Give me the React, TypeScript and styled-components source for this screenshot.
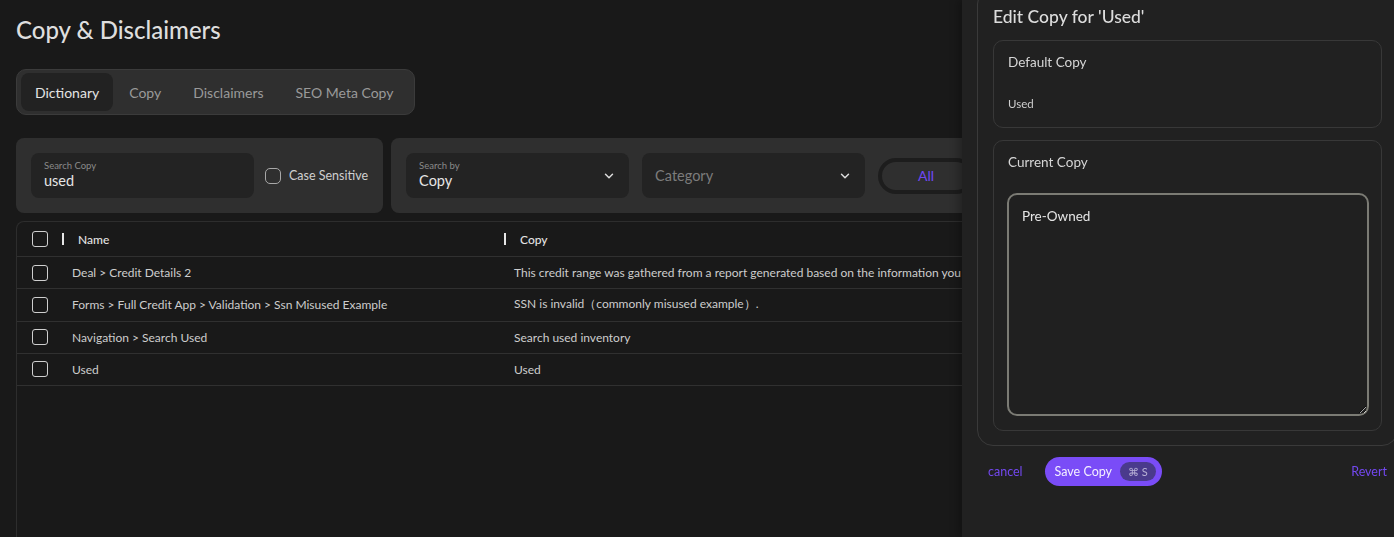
import React from 'react';
import styled, { createGlobalStyle } from 'styled-components';
import { ChevronDown } from 'lucide-react';

const GlobalStyle = createGlobalStyle`
  html, body {
    margin: 0;
    padding: 0;
    background: #191919;
    overflow: hidden;
  }
  body {
    font-family: Lato, 'Noto Sans', sans-serif;
    color: #dcdcdc;
  }
  * { box-sizing: border-box; }
`;

const Page = styled.div`
  height: 100vh;
  display: flex;
  flex-direction: column;
  padding: 15px 16px 0;
`;

const Title = styled.h1`
  margin: 0;
  font-size: 24px;
  line-height: 30px;
  font-weight: 500;
  color: #dedede;
`;

// 탭 영역
const Tabs = styled.div`
  margin-top: 24px;
  align-self: flex-start;
  display: flex;
  padding: 3px 4px;
  background: #2f2f2f;
  border: 1px solid #3b3b3b;
  border-radius: 10px;
`;

const Tab = styled.div<{ active?: boolean }>`
  height: 38px;
  display: flex;
  align-items: center;
  padding: ${(p) => (p.active ? '0 14px' : '0 16px')};
  border-radius: 8px;
  font-size: 14px;
  color: ${(p) => (p.active ? '#e4e4e4' : '#9a9a9a')};
  background: ${(p) => (p.active ? '#222222' : 'transparent')};
`;

// 필터 영역
const FilterRow = styled.div`
  margin-top: 23px;
  display: flex;
  gap: 8px;
`;

const FilterPanel = styled.div<{ grow?: boolean }>`
  display: flex;
  align-items: center;
  gap: ${(p) => (p.grow ? '13px' : '11px')};
  padding: 15px;
  background: #2f2f2f;
  border-radius: 8px;
  flex: ${(p) => (p.grow ? '1' : 'none')};
`;

const Field = styled.div`
  width: 223px;
  height: 45px;
  background: #232323;
  border-radius: 8px;
  padding: 0 13px;
  display: flex;
  align-items: center;
  justify-content: space-between;
`;

const FieldText = styled.div`
  display: flex;
  flex-direction: column;
  margin-top: -1px;
`;

const FieldLabel = styled.span`
  font-size: 9.5px;
  color: #8a8a8a;
  line-height: 12px;
`;

const FieldValue = styled.span<{ placeholder?: boolean }>`
  font-size: 14.5px;
  line-height: 18px;
  color: ${(p) => (p.placeholder ? '#7c7c7c' : '#e6e6e6')};
`;

const CheckLabel = styled.label`
  display: flex;
  align-items: center;
  gap: 8px;
  font-size: 12.5px;
  color: #d0d0d0;
`;

const Checkbox = styled.span<{ round?: boolean }>`
  width: 16px;
  height: 16px;
  flex: none;
  border: 1.5px solid ${(p) => (p.round ? '#a8a8a8' : '#cfcfcf')};
  border-radius: ${(p) => (p.round ? '5px' : '3px')};
`;

const Pill = styled.div`
  width: 96px;
  height: 36px;
  border: 4px solid #1d1d1d;
  border-radius: 18px;
  display: flex;
  align-items: center;
  justify-content: center;
  font-size: 14px;
  color: #7048f2;
`;

// 테이블 영역
const Table = styled.div`
  margin-top: 8px;
  flex: 1;
  border: 1px solid #2d2d2d;
  border-bottom: none;
  border-radius: 8px 8px 0 0;
  background: #191919;
  overflow: hidden;
`;

const Row = styled.div<{ header?: boolean }>`
  display: grid;
  grid-template-columns: 39px 442px 1fr;
  height: ${(p) => (p.header ? '35px' : '32.25px')};
  align-items: center;
  border-bottom: 1px solid #303030;
  font-size: 12px;
  color: ${(p) => (p.header ? '#e2e2e2' : '#cdcdcd')};
`;

const CheckCell = styled.div`
  padding-left: 15px;
  display: flex;
`;

const Cell = styled.div`
  padding-left: 16px;
  white-space: nowrap;
  overflow: hidden;
`;

const HeadCell = styled.div`
  display: flex;
  align-items: center;
  gap: 14px;
  padding-left: 6px;
  font-weight: 500;
  &::before {
    content: '';
    width: 2px;
    height: 12px;
    background: #e6e6e6;
  }
`;

// 우측 편집 패널 (화면 위에 겹쳐진 드로어)
const Drawer = styled.aside`
  position: fixed;
  top: 0;
  right: 0;
  width: 432px;
  height: 100vh;
  background: #212121;
  box-shadow: -4px 0 8px rgba(0, 0, 0, 0.25);
  padding-left: 15px;
  overflow: hidden;
`;

const EditCard = styled.div`
  margin-top: -12px;
  margin-right: -4px;
  border: 1px solid #3a3a3a;
  border-radius: 16px;
  padding: 17px 15px 14px;
  display: flex;
  flex-direction: column;
  gap: 12px;
`;

const EditTitle = styled.h2`
  margin: 0;
  font-size: 17.5px;
  line-height: 22px;
  font-weight: 500;
  color: #dcdcdc;
`;

const Box = styled.div`
  border: 1px solid #383838;
  border-radius: 10px;
  padding: 13px 14px 14px 14px;
`;

const BoxTitle = styled.div`
  font-size: 13.5px;
  line-height: 16px;
  color: #d6d6d6;
`;

const BoxValue = styled.div`
  margin-top: 25px;
  font-size: 11.5px;
  line-height: 18px;
  color: #cfcfcf;
`;

const TextArea = styled.textarea`
  display: block;
  margin-top: 23px;
  margin-left: -1px;
  width: 362px;
  height: 223px;
  resize: vertical;
  background: #202020;
  border: 2px solid #7b7b74;
  border-radius: 10px;
  padding: 13px 13px;
  font-family: inherit;
  font-size: 13.5px;
  color: #e4e4e4;
  outline: none;
  caret-color: #e4e4e4;
`;

const Footer = styled.div`
  margin-top: 11px;
  margin-right: 7px;
  display: flex;
  align-items: center;
  padding-left: 11px;
`;

const LinkButton = styled.button`
  background: none;
  border: none;
  padding: 0;
  font-family: inherit;
  font-size: 12.5px;
  color: #7348f0;
  cursor: pointer;
`;

const SaveButton = styled.button`
  margin-left: 22px;
  height: 29px;
  padding: 0 6px 0 10px;
  border: none;
  border-radius: 15px;
  background: #7a4cf7;
  color: #f4f0ff;
  font-family: inherit;
  font-size: 12.5px;
  display: flex;
  align-items: center;
  gap: 8px;
`;

const Kbd = styled.span`
  height: 19px;
  padding: 0 8px;
  border-radius: 10px;
  background: #4a3a8c;
  color: #b9b2d6;
  font-size: 11px;
  display: flex;
  align-items: center;
`;

const Spacer = styled.div`
  flex: 1;
`;

const rows = [
  {
    name: 'Deal > Credit Details 2',
    copy: 'This credit range was gathered from a report generated based on the information you provided and may differ from your actual score.',
  },
  {
    name: 'Forms > Full Credit App > Validation > Ssn Misused Example',
    copy: 'SSN is invalid（commonly misused example）.',
  },
  { name: 'Navigation > Search Used', copy: 'Search used inventory' },
  { name: 'Used', copy: 'Used' },
];

const tabs = ['Dictionary', 'Copy', 'Disclaimers', 'SEO Meta Copy'];

const App: React.FC = () => {
  return (
    <>
      <GlobalStyle />
      <Page>
        <Title>Copy &amp; Disclaimers</Title>

        <Tabs>
          {tabs.map((t, i) => (
            <Tab key={t} active={i === 0}>
              {t}
            </Tab>
          ))}
        </Tabs>

        <FilterRow>
          <FilterPanel>
            <Field>
              <FieldText>
                <FieldLabel>Search Copy</FieldLabel>
                <FieldValue>used</FieldValue>
              </FieldText>
            </Field>
            <CheckLabel>
              <Checkbox round />
              Case Sensitive
            </CheckLabel>
          </FilterPanel>
          <FilterPanel grow>
            <Field>
              <FieldText>
                <FieldLabel>Search by</FieldLabel>
                <FieldValue>Copy</FieldValue>
              </FieldText>
              <ChevronDown size={14} strokeWidth={2.5} color="#dddddd" />
            </Field>
            <Field>
              <FieldValue placeholder>Category</FieldValue>
              <ChevronDown size={14} strokeWidth={2.5} color="#dddddd" />
            </Field>
            <Pill>All</Pill>
          </FilterPanel>
        </FilterRow>

        <Table>
          <Row header>
            <CheckCell>
              <Checkbox />
            </CheckCell>
            <HeadCell>Name</HeadCell>
            <HeadCell>Copy</HeadCell>
          </Row>
          {rows.map((r) => (
            <Row key={r.name}>
              <CheckCell>
                <Checkbox />
              </CheckCell>
              <Cell>{r.name}</Cell>
              <Cell>{r.copy}</Cell>
            </Row>
          ))}
        </Table>
      </Page>

      <Drawer>
        <EditCard>
          <EditTitle>Edit Copy for 'Used'</EditTitle>
          <Box>
            <BoxTitle>Default Copy</BoxTitle>
            <BoxValue>Used</BoxValue>
          </Box>
          <Box>
            <BoxTitle>Current Copy</BoxTitle>
            <TextArea defaultValue="Pre-Owned" autoFocus />
          </Box>
        </EditCard>
        <Footer>
          <LinkButton>cancel</LinkButton>
          <SaveButton>
            Save Copy
            <Kbd>⌘ S</Kbd>
          </SaveButton>
          <Spacer />
          <LinkButton>Revert</LinkButton>
        </Footer>
      </Drawer>
    </>
  );
};

export default App;
